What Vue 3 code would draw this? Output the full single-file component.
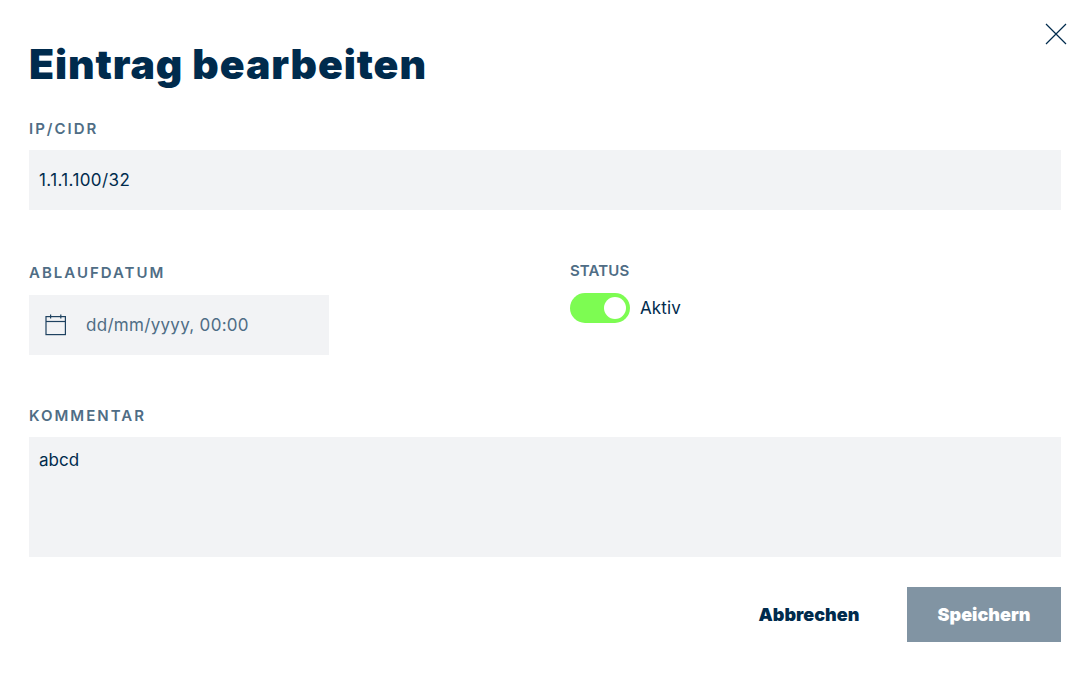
<template>
  <div class="dialog">
    <button class="close" type="button" aria-label="Schließen">
      <svg width="24" height="24" viewBox="0 0 24 24">
        <path d="M2 2 L22 22 M22 2 L2 22" stroke="#002b4d" stroke-width="1.2" fill="none" />
      </svg>
    </button>

    <h1>Eintrag bearbeiten</h1>

    <div class="field ip">
      <label for="ip">IP/CIDR</label>
      <input id="ip" class="control" type="text" v-model="ip" />
    </div>

    <div class="row">
      <div class="field date">
        <label for="date">ABLAUFDATUM</label>
        <div class="date-box">
          <svg width="22" height="22" viewBox="0 0 22 22" fill="none" stroke="#1f4260" stroke-width="1.2">
            <rect x="1" y="2.6" width="19.4" height="18" />
            <path d="M1 7.5 H20.4" />
            <path d="M5.6 0.5 V4.6 M15.8 0.5 V4.6" />
          </svg>
          <input id="date" type="text" placeholder="dd/mm/yyyy, 00:00" />
        </div>
      </div>
      <div class="status">
        <span class="status-label">STATUS</span>
        <div class="toggle-row">
          <span class="toggle" :class="{ on: active }" @click="active = !active">
            <span class="knob"></span>
          </span>
          <span class="toggle-text">Aktiv</span>
        </div>
      </div>
    </div>

    <div class="field comment">
      <label for="comment">KOMMENTAR</label>
      <textarea id="comment" class="control" v-model="comment"></textarea>
    </div>

    <div class="actions">
      <button class="cancel" type="button">Abbrechen</button>
      <button class="save" type="button">Speichern</button>
    </div>
  </div>
</template>

<script setup>
import { ref } from "vue";

const ip = ref("1.1.1.100/32");
const comment = ref("abcd");
const active = ref(true);
</script>

<style scoped>
.dialog {
  position: relative;
  box-sizing: border-box;
  width: 1090px;
  height: 681px;
  padding: 38px 29px 0;
  background: #fff;
  color: #002b4d;
  font-family: Inter, "Liberation Sans", sans-serif;
  overflow: hidden;
}
.close {
  position: absolute;
  top: 22px;
  right: 22px;
  width: 24px;
  height: 24px;
  padding: 0;
  border: none;
  background: none;
  line-height: 0;
}
h1 {
  margin: 0;
  font-size: 41px;
  line-height: 52px;
  font-weight: 900;
  letter-spacing: 0.9px;
}
label,
.status-label {
  display: block;
  color: #4f6d85;
  font-size: 15px;
  font-weight: 600;
  line-height: 18px;
  letter-spacing: 2px;
}
.field label {
  margin-bottom: 12px;
}
.ip {
  margin-top: 30px;
}
.control,
.date-box {
  display: block;
  box-sizing: border-box;
  width: 100%;
  border: none;
  border-radius: 0;
  background: #f2f3f5;
  color: #002b4d;
  font-family: inherit;
  font-size: 17px;
  outline: none;
}
input.control {
  height: 60px;
  padding: 0 10px;
  letter-spacing: 0.4px;
}
textarea.control {
  height: 120px;
  padding: 14px 10px;
  line-height: 19px;
  resize: none;
}
.row {
  display: flex;
  margin-top: 54px;
}
.date {
  width: 300px;
  margin-right: 241px;
}
.field.date label {
  margin-bottom: 13px;
}
.date-box {
  display: flex;
  align-items: center;
  height: 60px;
  padding-left: 16px;
}
.date-box input {
  width: 220px;
  margin-left: 19px;
  padding: 0;
  border: none;
  background: none;
  color: #4f6d85;
  font-family: inherit;
  font-size: 17px;
  letter-spacing: 0.3px;
  outline: none;
}
.date-box input::placeholder {
  color: #4f6d85;
  opacity: 1;
}
.status {
  margin-top: -2px;
}
.status-label {
  letter-spacing: 0.1px;
  margin-bottom: 13px;
}
.toggle-row {
  display: flex;
  align-items: center;
  gap: 10px;
}
.toggle {
  position: relative;
  display: block;
  width: 60px;
  height: 30px;
  border-radius: 15px;
  background: #c5ccd2;
}
.toggle.on {
  background: #7dfc52;
}
.knob {
  position: absolute;
  top: 4px;
  left: 34px;
  width: 22px;
  height: 22px;
  border-radius: 50%;
  background: #fff;
}
.toggle-text {
  font-size: 17px;
  letter-spacing: 0.1px;
}
.comment {
  margin-top: 52px;
}
.actions {
  display: flex;
  justify-content: flex-end;
  align-items: center;
  margin-top: 30px;
}
.actions button {
  border: none;
  border-radius: 0;
  font-family: inherit;
  font-size: 18px;
  font-weight: 900;
  padding: 0;
}
.cancel {
  width: 104px;
  margin-right: 46px;
  background: none;
  color: #002b4d;
}
.save {
  width: 154px;
  height: 55px;
  background: #8194a3;
  color: #fff;
}
</style>
